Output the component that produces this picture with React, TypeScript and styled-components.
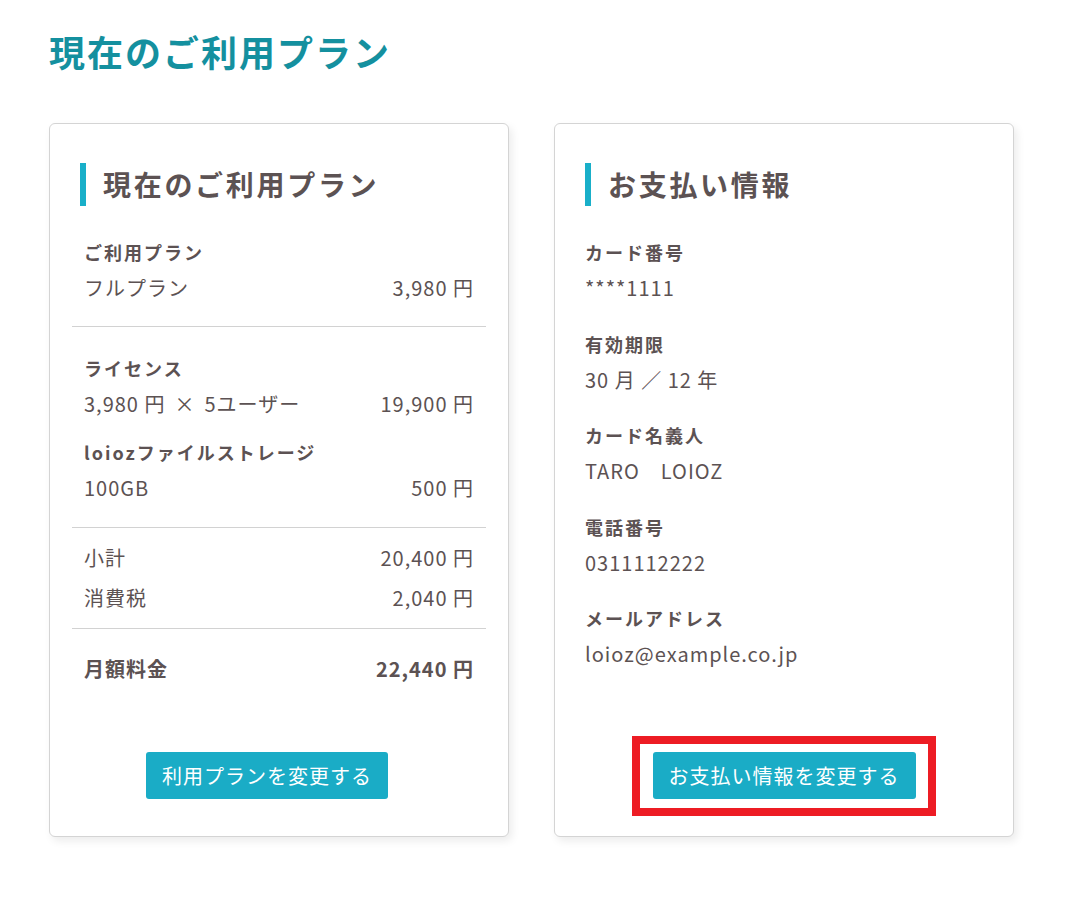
import React from "react";
import styled, { createGlobalStyle } from "styled-components";

const GlobalStyle = createGlobalStyle`
  body {
    margin: 0;
    background: #fff;
    font-family: "Noto Sans CJK JP", "Noto Sans", sans-serif;
    color: #5c5253;
  }
`;

const Page = styled.div`
  padding: 28px 49px 40px;
`;

const PageTitle = styled.h1`
  margin: 0 0 49px;
  font-size: 36px;
  font-weight: 700;
  line-height: 46px;
  letter-spacing: 2px;
  color: #14909f;
`;

const Cards = styled.div`
  display: grid;
  grid-template-columns: 460px 460px;
  gap: 45px;
`;

const Card = styled.section`
  display: flex;
  flex-direction: column;
  height: 714px;
  box-sizing: border-box;
  padding: 39px 22px 37px;
  border: 1px solid #d4d4d4;
  border-radius: 6px;
  background: #fff;
  box-shadow: 3px 4px 8px rgba(0, 0, 0, 0.08);
`;

const CardTitle = styled.h2`
  margin: 0 0 0 8px;
  padding-left: 17px;
  border-left: 6px solid #19afc9;
  font-size: 28px;
  font-weight: 700;
  line-height: 43px;
  letter-spacing: 2.7px;
  color: #5c5253;
`;

const Section = styled.div<{ $top: number; $bottom: number; $last?: boolean }>`
  padding: ${(p) => p.$top}px 12px ${(p) => p.$bottom}px;
  border-bottom: ${(p) => (p.$last ? "none" : "1px solid #d2d2d2")};
`;

const Label = styled.div<{ $gap?: number }>`
  margin-top: ${(p) => p.$gap ?? 0}px;
  font-size: 18px;
  font-weight: 700;
  line-height: 36px;
  letter-spacing: 2px;
`;

const Row = styled.div<{ $strong?: boolean; $tall?: boolean }>`
  display: flex;
  justify-content: space-between;
  font-size: 20px;
  font-weight: ${(p) => (p.$strong ? 700 : 400)};
  line-height: ${(p) => (p.$strong || p.$tall ? 40 : 36)}px;
  letter-spacing: 1px;
`;

const Times = styled.span`
  margin: 0 9px;
`;

const Fields = styled.div`
  padding-top: 28px;
`;

const Field = styled.div`
  padding: 0 8px;
  margin-bottom: 19.5px;
`;

const Value = styled.div`
  font-size: 20px;
  line-height: 36px;
  letter-spacing: 1px;
`;

const Footer = styled.div<{ $shift?: number }>`
  margin-top: auto;
  display: flex;
  justify-content: center;
  padding-right: ${(p) => p.$shift ?? 0}px;
`;

const Highlight = styled.div<{ $on?: boolean }>`
  position: relative;

  &::after {
    content: "";
    display: ${(p) => (p.$on ? "block" : "none")};
    position: absolute;
    top: -16px;
    bottom: -17px;
    left: -21px;
    right: -20px;
    border: 8px solid #ed1c24;
    pointer-events: none;
  }
`;

const Button = styled.button`
  height: 47px;
  padding: 0 16px;
  border: none;
  border-radius: 3px;
  background: #1aacc6;
  color: #fff;
  font-family: inherit;
  font-size: 20px;
  letter-spacing: 1px;
  cursor: pointer;
`;

const App = () => (
  <>
    <GlobalStyle />
    <Page>
      <PageTitle>現在のご利用プラン</PageTitle>
      <Cards>
        <Card>
          <CardTitle>現在のご利用プラン</CardTitle>
          <Section $top={28} $bottom={20}>
            <Label>ご利用プラン</Label>
            <Row>
              <span>フルプラン</span>
              <span>3,980 円</span>
            </Row>
          </Section>
          <Section $top={23} $bottom={21}>
            <Label>ライセンス</Label>
            <Row>
              <span>
                3,980 円<Times>×</Times>5ユーザー
              </span>
              <span>19,900 円</span>
            </Row>
            <Label $gap={12}>loiozファイルストレージ</Label>
            <Row>
              <span>100GB</span>
              <span>500 円</span>
            </Row>
          </Section>
          <Section $top={10} $bottom={10}>
            <Row $tall>
              <span>小計</span>
              <span>20,400 円</span>
            </Row>
            <Row $tall>
              <span>消費税</span>
              <span>2,040 円</span>
            </Row>
          </Section>
          <Section $top={20} $bottom={0} $last>
            <Row $strong>
              <span>月額料金</span>
              <span>22,440 円</span>
            </Row>
          </Section>
          <Footer $shift={24}>
            <Highlight>
              <Button>利用プランを変更する</Button>
            </Highlight>
          </Footer>
        </Card>
        <Card>
          <CardTitle>お支払い情報</CardTitle>
          <Fields>
            <Field>
              <Label>カード番号</Label>
              <Value>****1111</Value>
            </Field>
            <Field>
              <Label>有効期限</Label>
              <Value>30 月 ／ 12 年</Value>
            </Field>
            <Field>
              <Label>カード名義人</Label>
              <Value>TARO　LOIOZ</Value>
            </Field>
            <Field>
              <Label>電話番号</Label>
              <Value>0311112222</Value>
            </Field>
            <Field>
              <Label>メールアドレス</Label>
              <Value>loioz@example.co.jp</Value>
            </Field>
          </Fields>
          <Footer>
            <Highlight $on>
              <Button>お支払い情報を変更する</Button>
            </Highlight>
          </Footer>
        </Card>
      </Cards>
    </Page>
  </>
);

export default App;
